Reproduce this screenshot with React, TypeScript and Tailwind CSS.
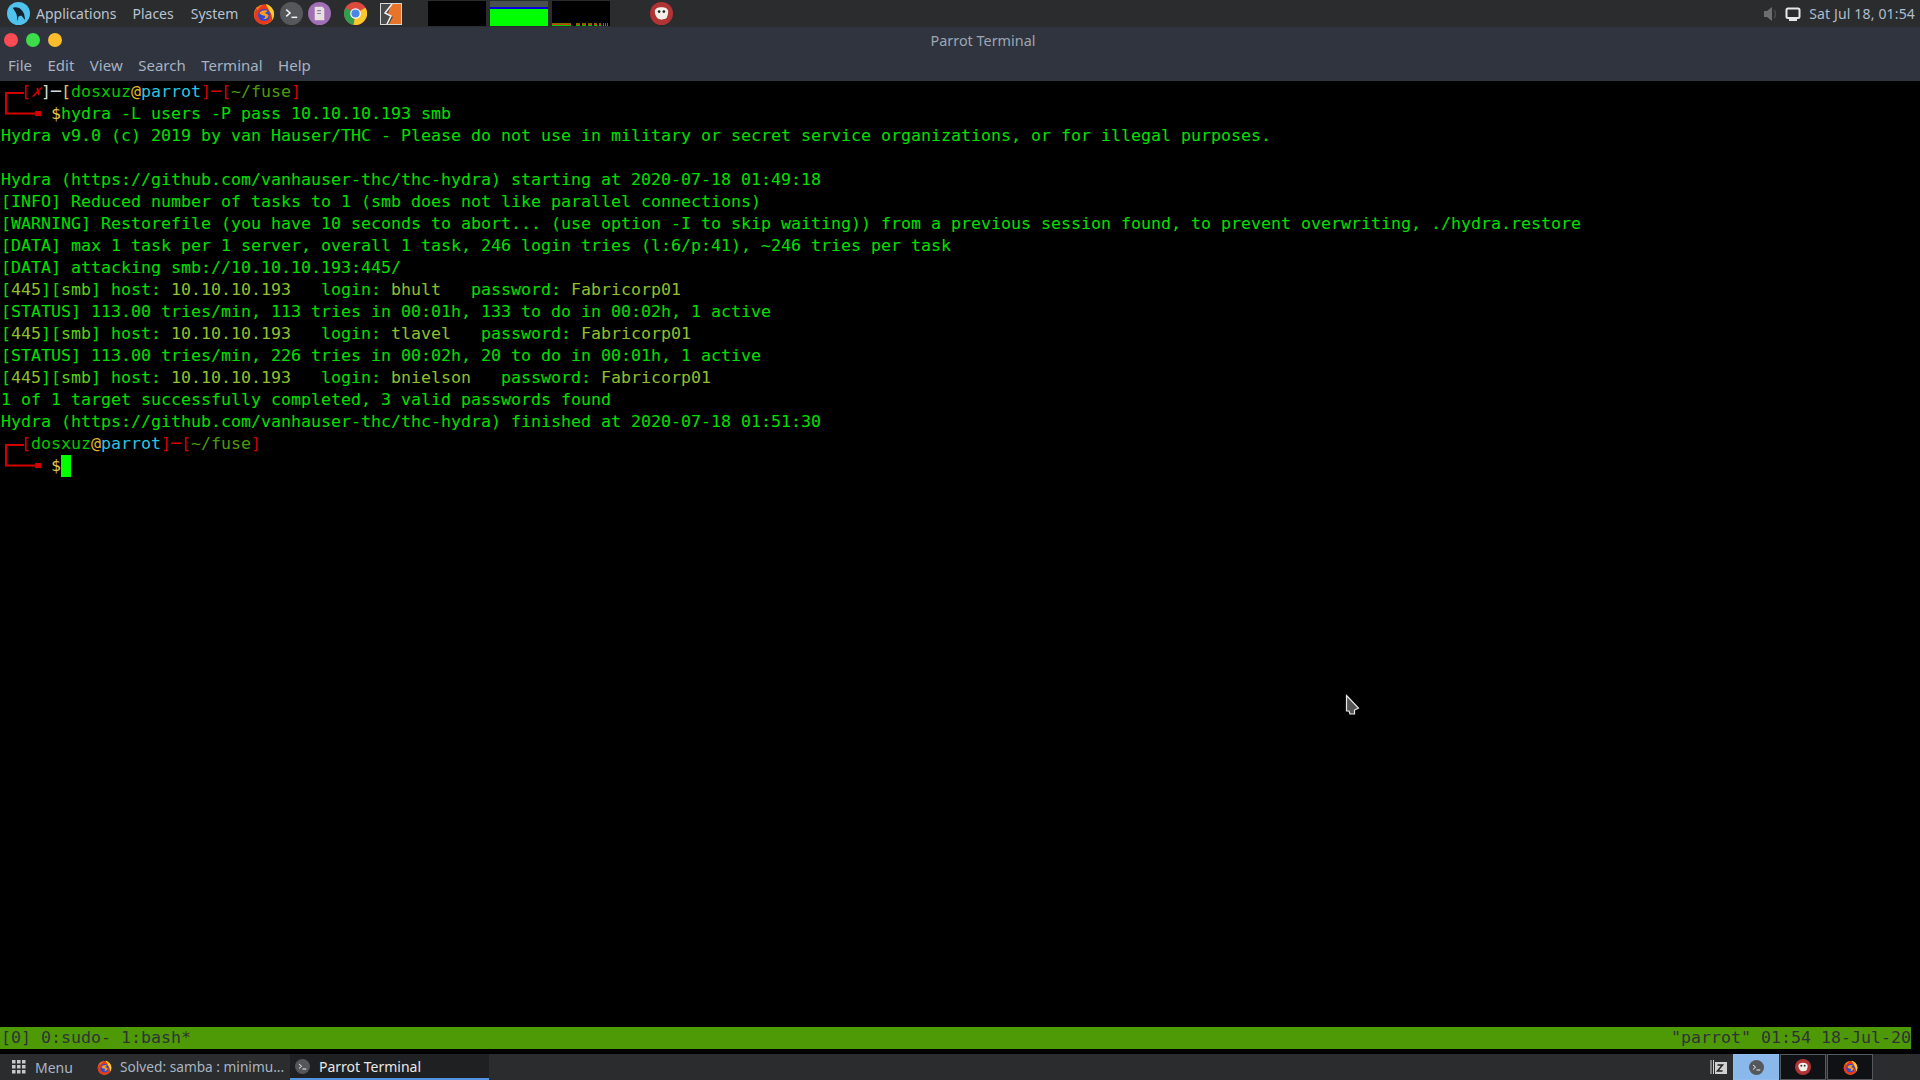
import type { ReactNode } from "react";

const G = "text-[#00e000]";
const O = "text-[#8fc02c]";

function Firefox({ size = 22 }: { size?: number }) {
  return (
    <svg width={size} height={size} viewBox="0 0 24 24">
      <circle cx="12" cy="12.5" r="11" fill="#f5821f" />
      <path d="M12 1.500c5 .5 9.500 4.500 10.500 9.500 .5 5-3 11-9 12C8 24 3 21 1.500 16 1 12 2.500 8 4 6l1 2c1-3 4-5 7-6.500z" fill="#e8381d" />
      <path d="M14 1c5 1 9 6 9 11 0 3-1 5-2 7 0-4-1-8-3-10-1-3-3-5-4-8z" fill="#ffcb2e" />
      <circle cx="12" cy="13" r="6.500" fill="#2a4bd7" />
      <path d="M7 11c2-3 7-4 9-2l-3 2 4 2c0 3-3 5-6 4.500 2-1 3-2 2-3.500-2 0-5-1-6-3z" fill="#ff9c1a" />
    </svg>
  );
}

function TermIcon({ size = 23, bg = "#55575a" }: { size?: number; bg?: string }) {
  return (
    <svg width={size} height={size} viewBox="0 0 24 24">
      <circle cx="12" cy="12" r="12" fill={bg} />
      <path d="M6.500 8l4 3.500-4 3.500" fill="none" stroke="#f2f2f2" strokeWidth="1.600" />
      <path d="M12 16h6" stroke="#f2f2f2" strokeWidth="1.600" />
    </svg>
  );
}

function Ghost({ size = 23 }: { size?: number }) {
  return (
    <svg width={size} height={size} viewBox="0 0 24 24">
      <circle cx="12" cy="12" r="12" fill="#b03434" />
      <path d="M5 10c0-3 3-4.500 7-4.500S19 7 19 10c0 3-1 5-1.500 6.500S14 18 12 18.500c-2-.5-4-.5-5-2.500S5 13 5 10z" fill="#f3f0ec" />
      <circle cx="9.500" cy="10" r="1.400" fill="#222" />
      <circle cx="14.500" cy="10" r="1.400" fill="#222" />
    </svg>
  );
}

function Chrome() {
  return (
    <svg width="23" height="23" viewBox="0 0 24 24">
      <circle cx="12" cy="12" r="12" fill="#dd4b3e" />
      <path d="M12 12L1.600 6A12 12 0 0 0 10 23.800z" fill="#2f9e4f" />
      <path d="M12 12l10.400-6A12 12 0 0 1 10 23.800z" fill="#f7c92c" />
      <circle cx="12" cy="12" r="5.500" fill="#fff" />
      <circle cx="12" cy="12" r="4.300" fill="#4a86e8" />
    </svg>
  );
}

function Prompt({ children, command }: { children: ReactNode; command?: string }) {
  return (
    <div className="relative h-[44px]">
      <svg className="absolute left-[5px] top-[11px]" width="38" height="26" viewBox="0 0 38 26">
        <path d="M19 1H1v20.500h32" fill="none" stroke="#d40000" strokeWidth="2" />
        <rect x="30" y="19" width="6" height="5" fill="#d40000" />
      </svg>
      <div className="h-[22px] whitespace-pre pl-[21px]">{children}</div>
      <div className="flex h-[22px] whitespace-pre pl-[51px]">
        <span className="text-[#e3c64a]">$</span>
        {command ? <span className={G}>{command}</span> : <span className="h-[22px] w-[10px] bg-[#00ff00]" />}
      </div>
    </div>
  );
}

function PromptHost() {
  return (
    <>
      <span className="text-[#00c800]">dosxuz</span>
      <span className="text-[#e3b52c]">@</span>
      <span className="text-[#2ec4e0]">parrot</span>
      <span className="text-[#d40000]">]─[</span>
      <span className="text-[#4e9a06]">~/fuse</span>
      <span className="text-[#d40000]">]</span>
    </>
  );
}

function HostLine({ login, password }: { login: string; password: string }) {
  return (
    <div className={`h-[22px] whitespace-pre pl-px ${G}`}>
      [<span className={O}>445</span>][<span className="text-[#5ed018]">smb</span>] host: <span className={O}>10.10.10.193</span>
      {"   login: "}
      <span className={O}>{login}</span>
      {"   password: "}
      <span className={O}>{password}</span>
    </div>
  );
}

function Line({ text }: { text: string }) {
  return <div className={`h-[22px] whitespace-pre pl-px ${G}`}>{text}</div>;
}

// tiny level meter at the foot of the third applet
const meter = [0, 1, 2, 3, 4, 5, 6, 7, 8, 9, 10, 11, 12, 13, 14, 15, 16, 17, 18, 24, 25, 26, 27, 30, 31, 32, 33, 36, 37, 38, 39, 42, 43, 44, 47, 48, 51, 53, 55];

export default function App() {
  return (
    <div className="relative flex h-[1080px] w-[1920px] flex-col overflow-hidden bg-black font-['Noto_Sans',sans-serif] text-[14px]">
      {/* top panel */}
      <div className="flex h-[27px] items-center bg-[#2b2c2e] text-[#b9c3cf]">
        <svg className="ml-[7px]" width="23" height="23" viewBox="0 0 24 24">
          <circle cx="12" cy="12" r="12" fill="#4fc3ee" />
          <path d="M6 6c5-2 10 1 12 7l1 6-4-5-3 1-1 5-1-7c-1-3-3-5-4-7z" fill="#15222b" />
        </svg>
        <span className="ml-[6px]">Applications</span>
        <span className="ml-[16px]">Places</span>
        <span className="ml-[17px]">System</span>
        <div className="ml-[15px] flex items-center">
          <Firefox />
          <span className="ml-[5px]"><TermIcon /></span>
          <span className="ml-[5px]">
            <svg width="23" height="23" viewBox="0 0 24 24">
              <circle cx="12" cy="12" r="12" fill="#a06fb5" />
              <path d="M7 5h8l2 2v12H7z" fill="#e6e1dc" />
              <path d="M9.500 9h4M9.500 12h4" stroke="#a06fb5" strokeWidth="1.200" />
            </svg>
          </span>
          <span className="ml-[13px]"><Chrome /></span>
          <span className="ml-[13px]">
            <svg width="22" height="22" viewBox="0 0 22 22">
              <rect x="0.500" y="0.500" width="21" height="21" fill="#4a4a4a" stroke="#d8d8d8" />
              <path d="M11 1h10v20H9l4-7-5-3z" fill="#e8742a" />
              <path d="M12 1L5 10l6 3-4 8" fill="none" stroke="#f2f2f2" strokeWidth="1.500" />
            </svg>
          </span>
        </div>
        <div className="ml-[26px] h-[25px] w-[58px] bg-black" />
        <div className="ml-[4px] flex h-[25px] w-[58px] flex-col bg-[#00ff00]">
          <div className="h-[6px] bg-[#4a5050]" />
          <div className="h-[2px] bg-[#0000e0]" />
        </div>
        <svg className="ml-[4px]" width="58" height="25" viewBox="0 0 58 25">
          <rect width="58" height="25" fill="#000" />
          {meter.map((x) => (
            <g key={x}>
              <rect x={x} y="22.500" width="1" height="1" fill="#ffd000" />
              <rect x={x} y="23.500" width="1" height="1" fill="#ff2020" />
              <rect x={x} y="24" width="1" height="1" fill="#00c000" />
            </g>
          ))}
        </svg>
        <span className="ml-[40px]"><Ghost /></span>
        <div className="ml-auto flex items-center pr-[5px]">
          <svg width="16" height="16" viewBox="0 0 16 16" fill="#6e6e6e">
            <path d="M1 5h3l5-4v14l-5-4H1z" />
            <path d="M11 4c2 2 2 6 0 8" fill="none" stroke="#4a4a4a" strokeWidth="1.500" />
          </svg>
          <svg className="ml-[6px]" width="16" height="16" viewBox="0 0 16 16">
            <rect x="1.500" y="2.500" width="13" height="9.500" rx="1.500" fill="none" stroke="#e8e8e8" strokeWidth="2" />
            <path d="M4 14h8" stroke="#e8e8e8" strokeWidth="2" />
          </svg>
          <span className="ml-[8px] tracking-[0.16px] text-[#aebccc]">Sat Jul 18, 01:54</span>
        </div>
      </div>

      {/* window title */}
      <div className="relative flex h-[26px] items-center justify-center bg-[#2f343f] pt-px text-[14.400px] text-[#9ea6b2]">
        <div className="absolute left-[4px] top-[6px] flex gap-[8px]">
          <span className="h-[14px] w-[14px] rounded-full bg-[#fc4b54]" />
          <span className="h-[14px] w-[14px] rounded-full bg-[#3ddc4b]" />
          <span className="h-[14px] w-[14px] rounded-full bg-[#fdbc2e]" />
        </div>
        <span className="ml-[46px]">Parrot Terminal</span>
      </div>

      {/* menu */}
      <div className="flex h-[28px] gap-[15.500px] bg-[#2f343f] pl-[8px] text-[15px] leading-[25px] text-[#a8b2c0]">
        <span>File</span>
        <span>Edit</span>
        <span>View</span>
        <span>Search</span>
        <span>Terminal</span>
        <span>Help</span>
      </div>

      {/* terminal */}
      <div className="h-[946px] font-['DejaVu_Sans_Mono',monospace] text-[16.620px] leading-[22px]">
        <Prompt command="hydra -L users -P pass 10.10.10.193 smb">
          <span className="absolute left-[21px] text-[#d40000]">[</span>
          <span className="absolute left-[31px] text-[#d40000] italic">✗</span>
          <span className="absolute left-[41px] text-[#d8d8d8]">]─</span>
          <span className="ml-[40px] text-[#e0c060]">[</span>
          <PromptHost />
        </Prompt>
        <Line text="Hydra v9.0 (c) 2019 by van Hauser/THC - Please do not use in military or secret service organizations, or for illegal purposes." />
        <Line text=" " />
        <Line text="Hydra (https://github.com/vanhauser-thc/thc-hydra) starting at 2020-07-18 01:49:18" />
        <Line text="[INFO] Reduced number of tasks to 1 (smb does not like parallel connections)" />
        <Line text="[WARNING] Restorefile (you have 10 seconds to abort... (use option -I to skip waiting)) from a previous session found, to prevent overwriting, ./hydra.restore" />
        <Line text="[DATA] max 1 task per 1 server, overall 1 task, 246 login tries (l:6/p:41), ~246 tries per task" />
        <Line text="[DATA] attacking smb://10.10.10.193:445/" />
        <HostLine login="bhult" password="Fabricorp01" />
        <Line text="[STATUS] 113.00 tries/min, 113 tries in 00:01h, 133 to do in 00:02h, 1 active" />
        <HostLine login="tlavel" password="Fabricorp01" />
        <Line text="[STATUS] 113.00 tries/min, 226 tries in 00:02h, 20 to do in 00:01h, 1 active" />
        <HostLine login="bnielson" password="Fabricorp01" />
        <Line text="1 of 1 target successfully completed, 3 valid passwords found" />
        <Line text="Hydra (https://github.com/vanhauser-thc/thc-hydra) finished at 2020-07-18 01:51:30" />
        <Prompt>
          <span className="text-[#d40000]">[</span>
          <PromptHost />
        </Prompt>
      </div>

      {/* tmux status */}
      <div className="flex h-[22px] w-[1911px] justify-between whitespace-pre bg-[#4e9a06] pl-px font-['DejaVu_Sans_Mono',monospace] text-[16.620px] leading-[22px] text-[#2e3436]">
        <span>[0] 0:sudo- 1:bash*</span>
        <span>"parrot" 01:54 18-Jul-20</span>
      </div>
      <div className="h-[5px] bg-black" />

      {/* bottom panel */}
      <div className="flex h-[26px] items-stretch bg-[#2b2c2e] text-[#a9b5c3]">
        <div className="flex w-[90px] items-center pl-[11px]">
          <svg width="16" height="16" viewBox="0 0 16 16" fill="#c8c8c8">
            {[1, 6, 11].flatMap((y) =>
              [1, 6, 11].map((x) => <rect key={`${x}-${y}`} x={x} y={y} width="3.500" height="3.500" />),
            )}
          </svg>
          <span className="ml-[8px]">Menu</span>
        </div>
        <div className="flex w-[200px] items-center pl-[7px]">
          <Firefox size={15} />
          <span className="ml-[8px] whitespace-nowrap text-[13.700px]">Solved: samba : minimu...</span>
        </div>
        <div className="flex w-[199px] items-center border-b-2 border-[#5294e2] bg-[#1f2022] pl-[5px] text-[#e8e8e8]">
          <TermIcon size={15} />
          <span className="ml-[9px]">Parrot Terminal</span>
        </div>
        <div className="ml-auto flex items-stretch pr-[47px]">
          <svg className="mr-[5px] self-center" width="18" height="16" viewBox="0 0 18 16">
            <path d="M1 1v14M3.500 1v14" stroke="#d0d0d0" />
            <rect x="5" y="3" width="12" height="12" fill="#d0d0d0" />
            <path d="M7.500 6h5l-5 6h5" fill="none" stroke="#222" strokeWidth="1.500" />
          </svg>
          <div className="flex w-[46px] items-center justify-center border border-[#8fbdf0] bg-[#8ab8ea]">
            <TermIcon size={15} />
          </div>
          <div className="ml-px flex w-[46px] items-center justify-center border border-[#55585c] bg-[#101114]">
            <Ghost size={16} />
          </div>
          <div className="ml-px flex w-[46px] items-center justify-center border border-[#55585c] bg-[#101114]">
            <Firefox size={15} />
          </div>
        </div>
      </div>

      {/* mouse pointer */}
      <svg className="absolute left-[1345px] top-[694px]" width="15" height="22" viewBox="0 0 15 22">
        <path d="M1.500 1.500L13.500 14l-4 2v4H5l-1-3-2.500 0z" fill="#555" stroke="#e8e8e8" strokeWidth="1.200" />
      </svg>
    </div>
  );
}
